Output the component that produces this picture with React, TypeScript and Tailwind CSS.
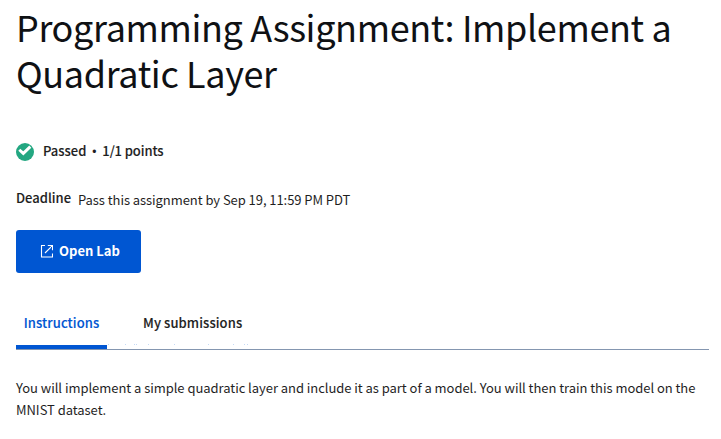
const font = "font-['Noto_Sans_CJK_SC','Source_Sans_Pro','Noto_Sans',sans-serif]";
const semibold = "font-medium [-webkit-text-stroke:0.12px_currentColor]";

const flecks = [108, 125, 134, 136, 148, 174, 208, 233, 244, 247];

function PassedIcon() {
  return (
    <svg width="18" height="18" viewBox="0 0 18 18" className="mt-px shrink-0">
      <circle cx="9" cy="9" r="9" fill="#23a781" />
      <path d="M3.3 6.7 7.3 10.4 14.3 3.6" fill="none" stroke="#fff" strokeWidth="2.9" />
    </svg>
  );
}

function LaunchIcon() {
  return (
    <svg width="13" height="13" viewBox="0 0 13 13" fill="none" stroke="#fff" strokeWidth="1.1" className="shrink-0">
      <path d="M5 .5H1.5v11.5h11V8.5M7.8 .5h4.7v4.7M12.2 .8 5 8" />
    </svg>
  );
}

export default function App() {
  return (
    <main className={`${font} h-[439px] w-[721px] overflow-hidden bg-white pl-4 pr-3 pt-[3px] text-[13px] text-[#1f1f1f]`}>
      <h1 className="text-[36px] leading-[46px] tracking-[-0.37px] text-[#0f1114]">
        Programming Assignment: Implement a<br />Quadratic Layer
      </h1>

      <div className={`${semibold} mt-[47px] flex h-[19px] items-center leading-[19px]`}>
        <PassedIcon />
        <span className="-mt-[2px] ml-[9px]">Passed</span>
        <span className="flex w-4 justify-center font-['Open_Sans'] text-[15px]">•</span>
        <span className="-mt-[2px] tracking-[-0.1px]">1/1 points</span>
      </div>

      <div className="mt-[27px] flex h-[20px] leading-[20px]">
        <span className={`${semibold} w-[62px]`}>Deadline</span>
        <span className="pt-[2px] tracking-[-0.06px]">Pass this assignment by Sep 19, 11:59 PM PDT</span>
      </div>

      <button className="mt-[22px] flex h-[43px] w-[125px] items-center rounded-[3px] bg-[#0056d2] pl-6 font-bold text-white">
        <LaunchIcon />
        <span className="-mt-[2px] ml-[6px]">Open Lab</span>
      </button>

      <div role="tablist" className={`${semibold} relative mt-[27px] flex h-[50px] w-[693px] border-b border-[#8496b0] leading-[20px] tracking-[0.1px]`}>
        <div role="tab" aria-selected="true" className="flex w-[91px] justify-center border-b-4 border-[#0056d2] pt-[13px] text-[#0056d2]">
          Instructions
        </div>
        <div role="tab" className="ml-[36px] pt-[13px]">My submissions</div>
        {flecks.map((x) => (
          <i key={x} className="absolute top-[44px] h-px w-px bg-[#c5daf5]" style={{ left: x - 16 }} />
        ))}
      </div>

      <p className="mt-[27px] whitespace-nowrap leading-[22px] tracking-[-0.044px]">
        You will implement a simple quadratic layer and include it as part of a model. You will then train this model on the<br />MNIST dataset.
      </p>
    </main>
  );
}
